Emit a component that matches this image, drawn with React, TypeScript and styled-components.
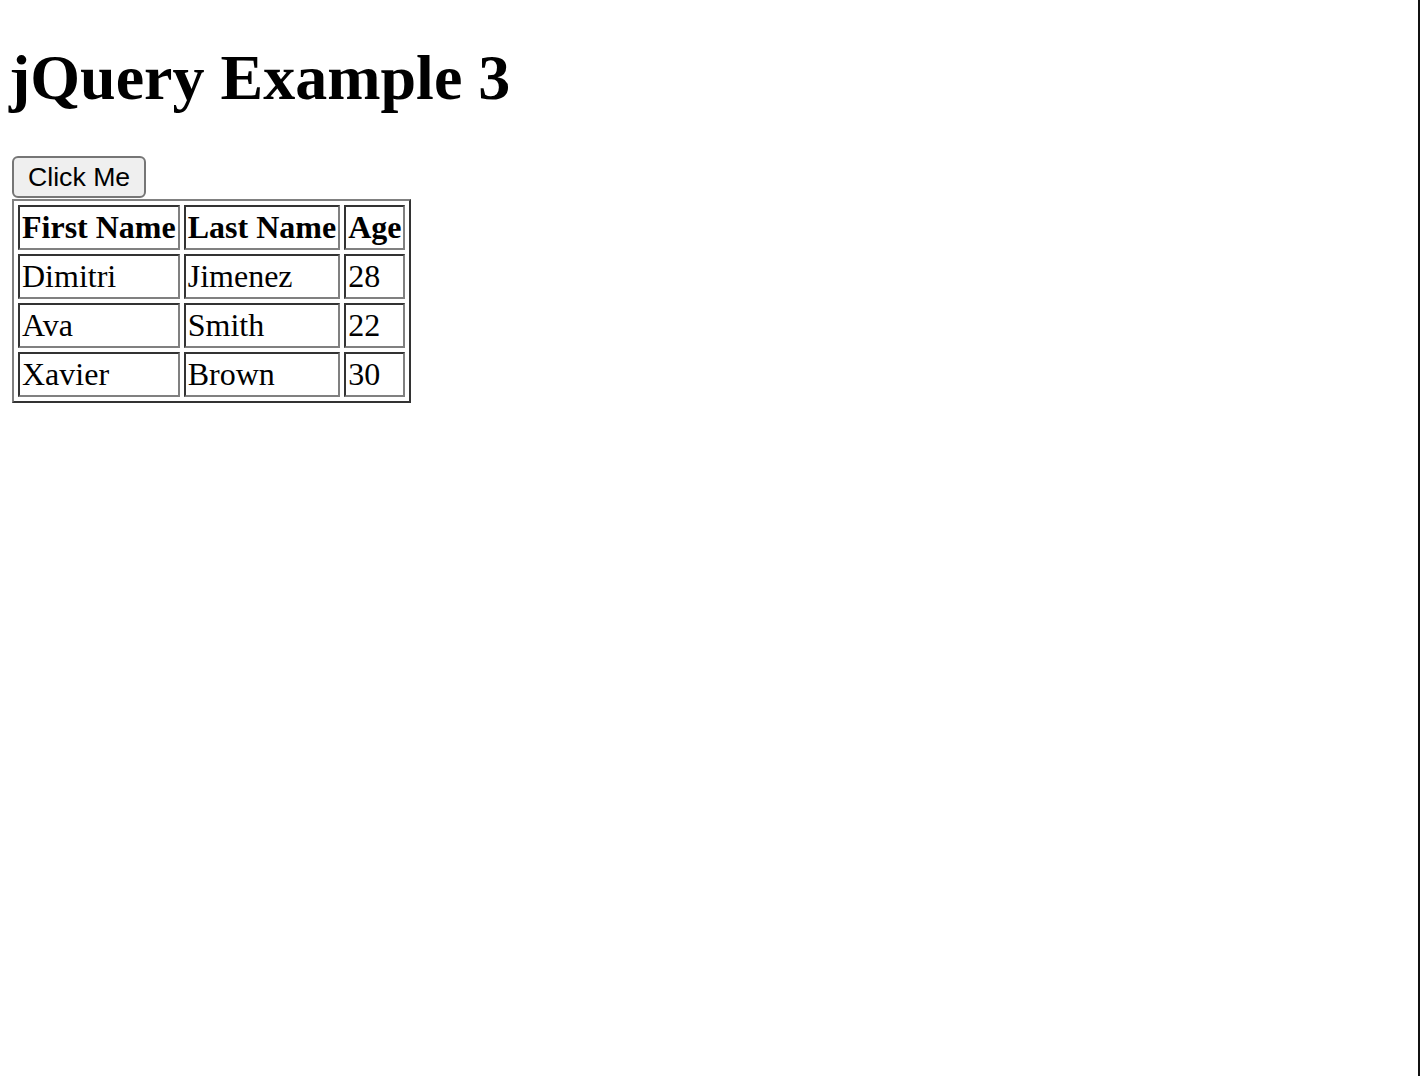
import React from 'react';
import styled, { createGlobalStyle } from 'styled-components';

const GlobalStyle = createGlobalStyle`
  html, body {
    margin: 0;
    padding: 0;
    height: 100%;
    background: #ffffff;
  }
  body {
    font-family: "Liberation Serif", "Times New Roman", serif;
    color: #000000;
  }
`;

const Page = styled.div`
  box-sizing: border-box;
  min-height: 100vh;
  padding: 0 0 0 12px;
  border-right: 2px solid #111111;
  overflow: hidden;
`;

const Title = styled.h1`
  margin: 42px 0 43px -3px;
  font-size: 64px;
  font-weight: bold;
  line-height: 71px;
`;

const ButtonRow = styled.div`
  display: flex;
  height: 43px;
`;

const Button = styled.button`
  box-sizing: border-box;
  height: 42px;
  padding: 0 14px;
  border: 2px solid #767676;
  border-radius: 6px;
  background: #efefef;
  color: #000000;
  font-family: "Liberation Sans", Arial, sans-serif;
  font-size: 26.667px;
  line-height: 1;
  cursor: pointer;
`;

const Table = styled.table`
  border-collapse: separate;
  border-spacing: 4px;
  border-style: solid;
  border-width: 2px;
  border-color: #808080 #333333 #333333 #808080;
  font-size: 32px;
  line-height: 37px;
`;

const cellBorder = `
  border-style: solid;
  border-width: 2px;
  border-color: #333333 #808080 #808080 #333333;
  padding: 2px;
  text-align: left;
  white-space: nowrap;
`;

const HeadCell = styled.th`
  ${cellBorder}
  font-weight: bold;
`;

const Cell = styled.td`
  ${cellBorder}
  font-weight: normal;
`;

type Person = { first: string; last: string; age: number };

const people: Person[] = [
  { first: 'Dimitri', last: 'Jimenez', age: 28 },
  { first: 'Ava', last: 'Smith', age: 22 },
  { first: 'Xavier', last: 'Brown', age: 30 },
];

export default function App() {
  return (
    <>
      <GlobalStyle />
      <Page>
        <Title>jQuery Example 3</Title>
        <ButtonRow>
          <Button type="button">Click Me</Button>
        </ButtonRow>
        <Table>
          <thead>
            <tr>
              <HeadCell>First Name</HeadCell>
              <HeadCell>Last Name</HeadCell>
              <HeadCell>Age</HeadCell>
            </tr>
          </thead>
          <tbody>
            {people.map((p) => (
              <tr key={p.first}>
                <Cell>{p.first}</Cell>
                <Cell>{p.last}</Cell>
                <Cell>{p.age}</Cell>
              </tr>
            ))}
          </tbody>
        </Table>
      </Page>
    </>
  );
}
